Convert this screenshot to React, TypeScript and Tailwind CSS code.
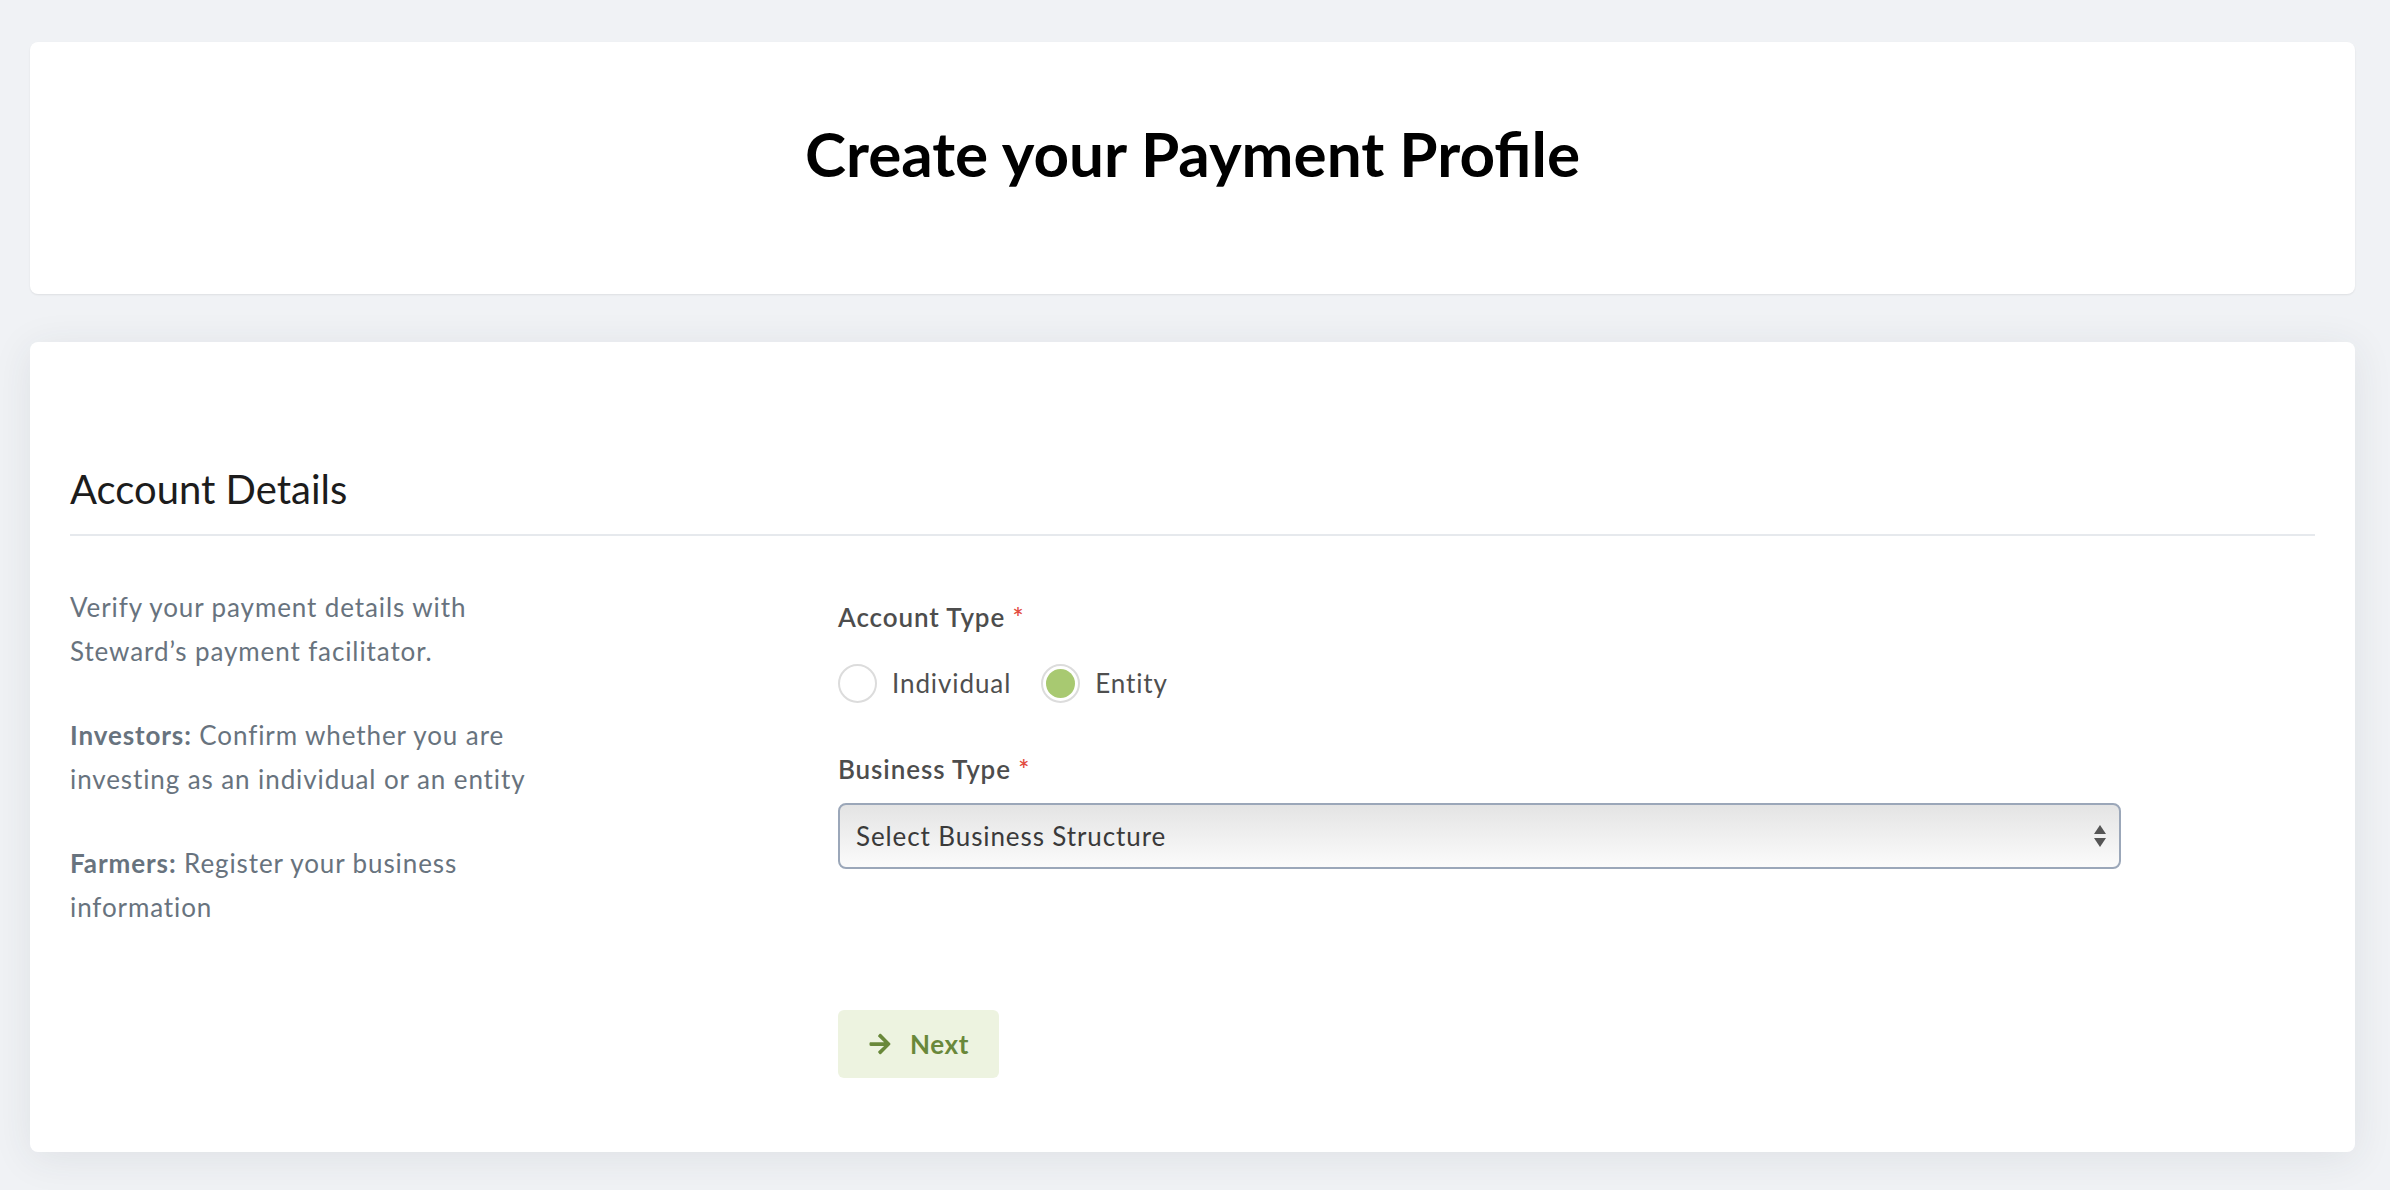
import React, { useState } from "react";
import { FaArrowRight } from "react-icons/fa";

type AccountType = "individual" | "entity";

function Radio({ checked, label, onClick }: { checked: boolean; label: string; onClick: () => void }) {
  return (
    <button type="button" onClick={onClick} className="flex items-center gap-[15px] h-[39px]">
      <span className="w-[39px] h-[39px] rounded-full border-2 border-[#dcdcdc] bg-white flex items-center justify-center">
        {checked && <span className="w-[29px] h-[29px] rounded-full bg-[#a8c971]" />}
      </span>
      <span className="text-[26px] leading-[39px] tracking-[0.9px] text-[#4f4f4f]">{label}</span>
    </button>
  );
}

export default function App() {
  const [accountType, setAccountType] = useState<AccountType>("entity");

  return (
    <div
      className="min-h-screen bg-[#f0f2f5] pt-[42px] pl-[30px] pr-[35px] pb-[38px]"
      style={{ fontFamily: "Lato, 'Open Sans', sans-serif" }}
    >
      {/* Page title */}
      <div className="h-[252px] pb-[30px] bg-white rounded-[8px] flex items-center justify-center shadow-[0_1px_2px_rgba(0,0,0,0.08)]">
        <h1 className="text-[62px] leading-none font-bold text-black">Create your Payment Profile</h1>
      </div>

      {/* Account details card */}
      <div className="mt-[48px] bg-white rounded-[8px] px-[40px] pt-[124px] pb-[74px] shadow-[0_6px_40px_rgba(40,50,70,0.09)]">
        <h2 className="text-[40px] leading-[46px] text-[#1c1c1c] pb-[22px] border-b-2 border-[#e6e9ed]">
          Account Details
        </h2>

        <div className="flex mt-[49px]">
          <div className="w-[768px] shrink-0">
            <div className="max-w-[490px] text-[26px] leading-[44px] tracking-[0.9px] text-[#68737e]">
              <p>Verify your payment details with Steward’s payment facilitator.</p>
              <p className="mt-[40px]">
                <b>Investors:</b> Confirm whether you are investing as an individual or an entity
              </p>
              <p className="mt-[40px]">
                <b>Farmers:</b> Register your business information
              </p>
            </div>
          </div>

          <div className="flex-1 pt-[14px]">
            <label className="block text-[26px] leading-[36px] tracking-[0.9px] font-semibold text-[#4d4d4d]">
              Account Type <span className="text-[#e24b40]">*</span>
            </label>
            <div className="mt-[29px] flex items-center gap-[30px]">
              <Radio checked={accountType === "individual"} label="Individual" onClick={() => setAccountType("individual")} />
              <Radio checked={accountType === "entity"} label="Entity" onClick={() => setAccountType("entity")} />
            </div>

            <label className="block mt-[48px] text-[26px] leading-[36px] tracking-[0.9px] font-semibold text-[#4d4d4d]">
              Business Type <span className="text-[#e24b40]">*</span>
            </label>
            <div className="mt-[16px] w-[1283px] h-[66px] rounded-[8px] border-2 border-[#9ba7b9] bg-gradient-to-b from-[#e4e4e4] to-[#fbfbfb] flex items-center justify-between pl-[16px] pr-[12px]">
              <span className="text-[26px] tracking-[0.9px] text-[#3a3a3a]">Select Business Structure</span>
              <svg width="14" height="24" viewBox="0 0 14 24" className="shrink-0">
                <path d="M7 1 L13 10 L1 10 Z" fill="#555" />
                <path d="M1 14 L13 14 L7 23 Z" fill="#555" />
              </svg>
            </div>

            <button
              type="button"
              className="mt-[141px] h-[68px] px-[30px] rounded-[6px] bg-[#edf3e0] text-[#69883a] flex items-center gap-[18px]"
            >
              <FaArrowRight className="w-[24px] h-[24px]" />
              <span className="text-[26px] tracking-[0.6px] font-bold">Next</span>
            </button>
          </div>
        </div>
      </div>
    </div>
  );
}
